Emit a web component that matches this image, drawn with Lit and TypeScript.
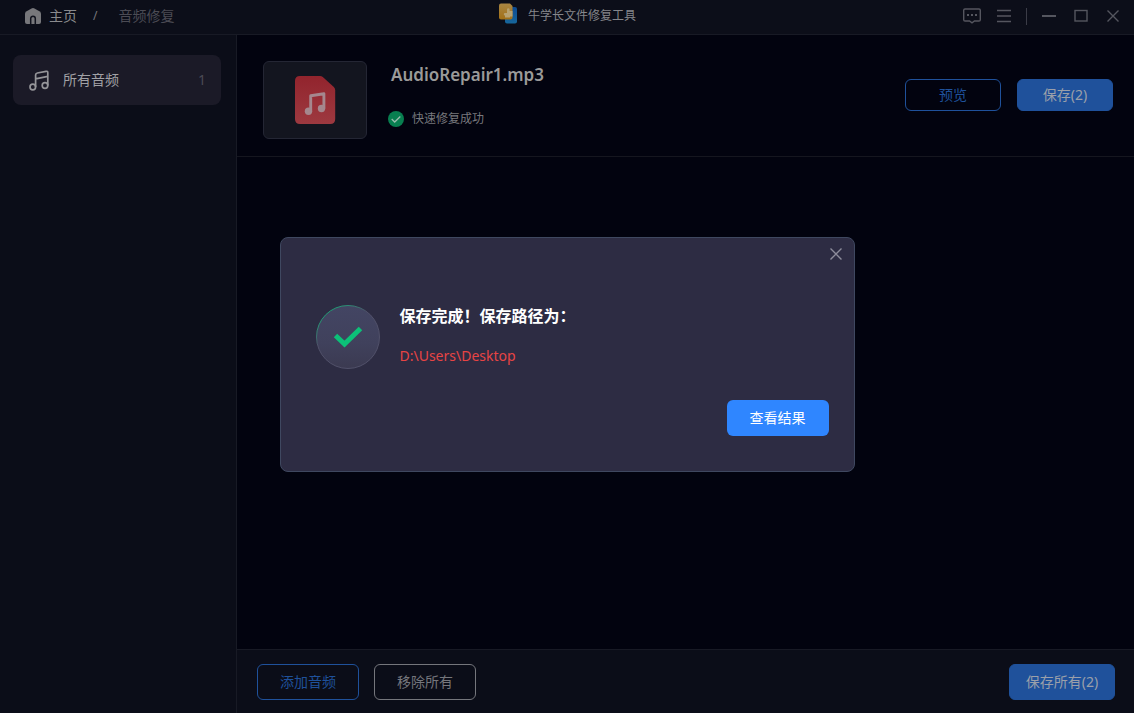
import { LitElement, html, css, svg } from "lit";
import { customElement, property } from "lit/decorators.js";

const note = svg`<circle cx="3.800" cy="17" r="2.800"></circle><circle cx="16" cy="15.500" r="2.800"></circle><path d="M6.600 17V5Q6.600 3.300 8.300 3L17 1.300Q18.800 1 18.800 2.800V15.500M6.600 8.800L18.800 6.300"></path>`;

@customElement("title-bar")
class TitleBar extends LitElement {
  static styles = css`
    :host {
      display: grid;
      grid-template-columns: 1fr auto 1fr;
      align-items: center;
      box-sizing: border-box;
      height: 35px;
      padding-bottom: 2px;
      border-bottom: 1px solid #181a25;
      background: #0c0e19;
    }
    svg { display: block; }
    .crumbs { display: flex; align-items: center; padding-left: 24px; font-size: 14px; line-height: 20px; color: #77777c; }
    .home { display: flex; align-items: center; gap: 7px; color: #8a8a8d; text-decoration: none; }
    .slash { margin: 0 21px 0 16px; font-size: 12px; }
    .current { color: #4b4b54; }
    .brand { display: flex; align-items: center; gap: 10px; }
    h1 { margin: 0; font-size: 12px; line-height: 16px; font-weight: 400; color: #85868b; }
    .brand svg { margin-bottom: 6px; }
    .tools { display: flex; align-items: center; justify-content: flex-end; padding-right: 11px; gap: 12px; }
    button { display: block; padding: 0; border: 0; background: none; color: #55565f; }
    .divider { width: 1px; height: 17px; background: #3b3c47; }
    .pair { display: flex; align-items: center; gap: 12px; }
  `;
  render() {
    return html`
      <nav class="crumbs" aria-label="导航">
        <a class="home" href="#">
          <svg width="18" height="18" viewBox="0 0 18 18"><path fill="#77777b" d="M9 1Q9.800 1 10.500 1.400L15.800 4.600Q17 5.400 17 6.800V15Q17 17 15 17H3Q1 17 1 15V6.800Q1 5.400 2.200 4.600L7.500 1.400Q8.200 1 9 1Z"></path><path fill="none" stroke="#11131e" stroke-width="1.500" d="M6.700 17V11.500A2.300 2.300 0 0 1 11.300 11.500V17"></path></svg>
          <span>主页</span>
        </a>
        <span class="slash">/</span>
        <span class="current">音频修复</span>
      </nav>
      <div class="brand">
        <svg width="20" height="21" viewBox="0 0 20 21">
          <defs><linearGradient id="gold" x2="0" y2="1"><stop stop-color="#a98643"></stop><stop offset="1" stop-color="#a27016"></stop></linearGradient>
          <linearGradient id="sea" x2="0" y2="1"><stop stop-color="#0d4a91"></stop><stop offset="1" stop-color="#17679b"></stop></linearGradient></defs>
          <path fill="url(#sea)" d="M8 4H17Q19 4 19 6V18.500Q19 20.500 17 20.500H9Q7 20.500 7 18.500V6Q7 4 8 4Z"></path>
          <path fill="url(#gold)" d="M3 .5H12L14.500 3V14.500Q14.500 16.500 12.500 16.500H3Q1 16.500 1 14.500V2.500Q1 .5 3 .5Z"></path>
          <path fill="#b8a270" d="M9 8V6.500A1.300 1.300 0 0 1 11.600 6.500V8H14.500V13.500H12V14.500H7V12.500A1.200 1.200 0 0 1 7 10.100H9Z"></path>
        </svg>
        <h1>牛学长文件修复工具</h1>
      </div>
      <div class="tools">
        <button aria-label="反馈"><svg width="20" height="20" viewBox="0 0 20 20" fill="none" stroke="currentColor" stroke-width="1.400"><path d="M3 3H17Q18.300 3 18.300 4.300V13.700Q18.300 15 17 15H12.500L10 16.800L7.500 15H3Q1.700 15 1.700 13.700V4.300Q1.700 3 3 3Z"></path><path stroke-width="2" d="M5 9H7M9 9H11M13 9H15"></path></svg></button>
        <button aria-label="菜单"><svg width="20" height="20" viewBox="0 0 20 20" stroke="currentColor" stroke-width="1.400"><path d="M3 4.500H17M3 10H17M3 15.500H17"></path></svg></button>
        <div class="pair">
        <span class="divider"></span>
        <button aria-label="最小化"><svg width="20" height="20" viewBox="0 0 20 20" stroke="currentColor" stroke-width="2"><path d="M3 10H17"></path></svg></button>
        <button aria-label="最大化"><svg width="20" height="20" viewBox="0 0 20 20" fill="none" stroke="currentColor" stroke-width="1.400"><rect x="4" y="4.500" width="12" height="10.500"></rect></svg></button>
        <button aria-label="关闭"><svg width="20" height="20" viewBox="0 0 20 20" stroke="currentColor" stroke-width="1.400"><path d="M4.500 4.500L15.500 15.500M15.500 4.500L4.500 15.500"></path></svg></button>
        </div>
      </div>`;
  }
}

@customElement("side-nav")
class SideNav extends LitElement {
  static styles = css`
    :host { display: block; padding: 20px 15px 20px 13px; border-right: 1px solid #181a25; background: #0b0d18; box-sizing: border-box; }
    .item { display: flex; align-items: center; gap: 13px; height: 50px; padding: 0 15px 0 16px; border-radius: 8px; background: #1b1a27; color: #a1a1a5; font-size: 14px; line-height: 20px; text-decoration: none; }
    .label { flex: 1; }
    .count { color: #4b4b55; }
  `;
  render() {
    return html`<a class="item" href="#">
      <svg width="21" height="21" viewBox="0 0 21 21" fill="none" stroke="#959599" stroke-width="1.700">${note}</svg>
      <span class="label">所有音频</span><span class="count">1</span></a>`;
  }
}

@customElement("audio-row")
class AudioRow extends LitElement {
  @property() name = "";
  static styles = css`
    :host { display: flex; align-items: flex-start; padding: 26px 21px 17px 26px; border-bottom: 1px solid #15161f; }
    .thumb { display: grid; place-items: center; box-sizing: border-box; width: 104px; height: 78px; border: 1px solid #242634; border-radius: 6px; background: #13151f; }
    .info { flex: 1; padding-left: 21px; }
    h2 { margin: 2px 0 20px 3px; font-size: 17px; line-height: 24px; font-weight: 600; color: #9a9a99; }
    .status { display: flex; align-items: center; gap: 8px; font-size: 12px; line-height: 24px; color: #77787d; }
    .actions { display: flex; gap: 16px; padding-top: 18px; }
    button { box-sizing: border-box; width: 96px; height: 32px; padding: 0; border: 1px solid #1f519b; border-radius: 6px; background: none; color: #1f519b; font: inherit; font-size: 14px; line-height: 20px; }
    .fill { background: #1f519b; color: #9ba0aa; }
  `;
  render() {
    return html`
      <div class="thumb">
        <svg width="42" height="50" viewBox="0 0 42 50">
          <defs><linearGradient id="red" x2="0" y2="1"><stop stop-color="#92242d"></stop><stop offset="1" stop-color="#9d3940"></stop></linearGradient></defs>
          <path fill="url(#red)" d="M6 1H26Q27.500 1 28.800 2L39.800 12Q41.200 13.300 41.200 15.200V44Q41.200 49 36.200 49H6Q1 49 1 44V6Q1 1 6 1Z"></path>
          <g fill="#a5878e"><circle cx="14.500" cy="36.300" r="3.700"></circle><circle cx="27.500" cy="33.500" r="3.700"></circle></g>
          <path fill="none" stroke="#a5878e" stroke-width="2.900" stroke-linejoin="round" d="M16.700 36.500V20.800L29.900 18.800V33.500"></path>
        </svg>
      </div>
      <div class="info">
        <h2>${this.name}</h2>
        <div class="status">
          <svg width="16" height="16" viewBox="0 0 16 16"><circle cx="8" cy="8" r="8" fill="#087f50"></circle><path d="M3.700 8L6.700 11L12.300 5.500" fill="none" stroke="#9cbcaf" stroke-width="1.300"></path></svg>
          <span>快速修复成功</span>
        </div>
      </div>
      <div class="actions"><button>预览</button><button class="fill">保存(2)</button></div>`;
  }
}

@customElement("save-dialog")
class SaveDialog extends LitElement {
  @property() path = "";
  static styles = css`
    :host { position: absolute; inset: 0; display: grid; place-items: center; padding-bottom: 4px; }
    .box { position: relative; box-sizing: border-box; width: min(575px, 92vw); padding: 66px 25px 35px 35px; border: 1px solid #3f4860; border-radius: 8px; background: #2d2c43; }
    .body { display: flex; gap: 20px; }
    .seal { display: block; flex: none; margin-top: 1px; }
    h2 { margin: 0 0 16px; font-size: 16px; line-height: 24px; font-weight: 700; color: #fff; }
    .path { font-size: 14px; line-height: 24px; color: #e74444; text-decoration: none; }
    .foot { display: flex; justify-content: flex-end; padding-top: 31px; }
    .view { width: 102px; height: 36px; padding: 0; border: 0; border-radius: 6px; background: #2f86ff; color: #fff; font: inherit; font-size: 14px; line-height: 20px; }
    .close { position: absolute; top: 8px; right: 10px; padding: 0; border: 0; background: none; }
    .close svg { display: block; }
  `;
  render() {
    return html`
      <section class="box" role="dialog" aria-label="保存完成">
        <button class="close" aria-label="关闭"><svg width="16" height="16" viewBox="0 0 16 16" stroke="#8d8c9b" stroke-width="1.400"><path d="M2.500 2.500L13.500 13.500M13.500 2.500L2.500 13.500"></path></svg></button>
        <div class="body">
          <svg class="seal" width="64" height="64" viewBox="0 0 64 64">
            <defs>
              <linearGradient id="disc" x2="0" y2="1"><stop stop-color="#434563"></stop><stop offset=".6" stop-color="#40415c"></stop><stop offset="1" stop-color="#3b3a51"></stop></linearGradient>
              <linearGradient id="rim" x1=".2" y1="0" x2=".55" y2=".5"><stop stop-color="#16a873"></stop><stop offset=".3" stop-color="#2e8b74"></stop><stop offset=".7" stop-color="#505069"></stop></linearGradient>
            </defs>
            <circle cx="32" cy="32" r="31.500" fill="url(#disc)" stroke="url(#rim)"></circle>
            <path d="M19.500 30.500L28.500 39L44.500 23.500" fill="none" stroke="#0cc078" stroke-width="5"></path>
          </svg>
          <div>
            <h2>保存完成！保存路径为：</h2>
            <a class="path" href="#">${this.path}</a>
          </div>
        </div>
        <div class="foot"><button class="view">查看结果</button></div>
      </section>`;
  }
}

@customElement("app-root")
class AppRoot extends LitElement {
  static styles = css`
    :host { position: relative; display: grid; grid-template-rows: auto 1fr; min-height: 100vh; background: #02030f; font-family: "Noto Sans", "Noto Sans CJK SC", sans-serif; }
    .main { display: grid; grid-template-columns: 237px 1fr; }
    .content { display: flex; flex-direction: column; }
    .list { flex: 1; }
    .footer { display: flex; align-items: center; gap: 15px; box-sizing: border-box; height: 64px; padding: 0 19px 0 20px; border-top: 1px solid #181a25; background: #0b0d18; }
    button { box-sizing: border-box; width: 102px; height: 36px; padding: 0; border: 1px solid #1f519b; border-radius: 6px; background: none; color: #1f519b; font: inherit; font-size: 14px; line-height: 20px; }
    .plain { border-color: #75767c; color: #75767c; }
    .fill { width: 106px; margin-left: auto; background: #1f519b; color: #9ba0aa; }
  `;
  render() {
    return html`
      <title-bar></title-bar>
      <div class="main">
        <side-nav></side-nav>
        <div class="content">
          <div class="list"><audio-row name="AudioRepair1.mp3"></audio-row></div>
          <div class="footer">
            <button>添加音频</button>
            <button class="plain">移除所有</button>
            <button class="fill">保存所有(2)</button>
          </div>
        </div>
      </div>
      <save-dialog path="D:\\Users\\Desktop"></save-dialog>`;
  }
}
